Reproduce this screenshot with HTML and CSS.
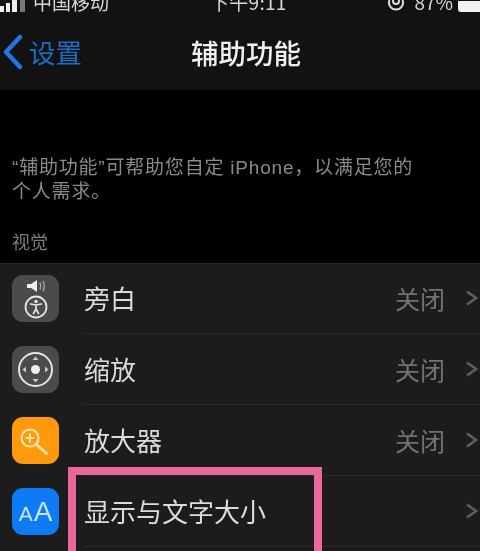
FILE: index.html
```html
<!DOCTYPE html>
<html lang="zh-CN">
<head>
<meta charset="utf-8">
<title>辅助功能</title>
<link rel="stylesheet" href="styles.css">
</head>
<body>
<div class="screen">
  <header class="top">
    <div class="status">
      <div class="status-left">
        <svg class="signal" viewBox="0 0 26 12"><rect x="0" y="6" width="4" height="6" fill="#eee"/><rect x="6" y="3" width="4" height="9" fill="#eee"/><rect x="12" y="0" width="5" height="12" fill="#eee"/><rect x="20" y="0" width="5" height="12" fill="#777"/></svg>
        <span class="status-text">中国移动</span>
      </div>
      <span class="status-text status-time">下午9:11</span>
      <div class="status-right">
        <svg class="lock" viewBox="0 0 18 12"><path d="M15.500 0a7 7 0 1 1-13 0" fill="none" stroke="#ddd" stroke-width="2"/><circle cx="9" cy="1" r="3" fill="none" stroke="#ddd" stroke-width="2"/></svg>
        <span class="status-text">87%</span>
        <span class="battery"></span>
      </div>
    </div>
    <nav class="nav">
      <div class="back">
        <svg class="back-arrow" viewBox="0 0 21 36"><path d="M18 3 4 18l14 15" fill="none" stroke="#1f78e0" stroke-width="4.500" stroke-linecap="round" stroke-linejoin="round"/></svg>
        <span class="back-label">设置</span>
      </div>
      <h1 class="title">辅助功能</h1>
    </nav>
  </header>

  <section class="intro">
    <p class="desc">“辅助功能”可帮助您自定 iPhone，以满足您的<br>个人需求。</p>
    <h2 class="group">视觉</h2>
  </section>

  <ul class="list">
    <li class="row">
      <span class="icon icon-gray">
        <svg viewBox="0 0 47 47"><path d="M15 9h4l6-4v12l-6-4h-4z" fill="#eee"/><path d="M28 7.500q1.500 3.500 0 7M31 6q2.500 5 0 10" fill="none" stroke="#aaa" stroke-width="1.300"/><circle cx="24" cy="32" r="10.500" fill="none" stroke="#e4e4e4" stroke-width="1.800"/><circle cx="24" cy="26.500" r="1.700" fill="#e4e4e4"/><path d="M18.500 29 24 30l5.500-1M24 30v4M24 34l-2.500 4.500M24 34l2.500 4.500" fill="none" stroke="#e4e4e4" stroke-width="1.700" stroke-linecap="round"/></svg>
      </span>
      <div class="row-body">
        <span class="label">旁白</span>
        <span class="value">关闭</span>
        <svg class="chev" viewBox="0 0 13 16"><path d="m2 1.500 9 6.500-9 6.500" fill="none" stroke="#5e5e60" stroke-width="2.600"/></svg>
      </div>
    </li>
    <li class="row">
      <span class="icon icon-gray">
        <svg viewBox="0 0 47 47"><circle cx="23.500" cy="23.500" r="16.500" fill="none" stroke="#e4e4e4" stroke-width="2"/><circle cx="23.500" cy="23.500" r="4.500" fill="#eee"/><path d="m23.500 10.500 3 3.500h-6zM23.500 36.500l3-3.500h-6zM10.500 23.500l3.500-3v6zM36.500 23.500l-3.500-3v6z" fill="#ccc"/></svg>
      </span>
      <div class="row-body">
        <span class="label">缩放</span>
        <span class="value">关闭</span>
        <svg class="chev" viewBox="0 0 13 16"><path d="m2 1.500 9 6.500-9 6.500" fill="none" stroke="#5e5e60" stroke-width="2.600"/></svg>
      </div>
    </li>
    <li class="row">
      <span class="icon icon-orange">
        <svg viewBox="0 0 47 47"><circle cx="18" cy="21" r="8.500" fill="none" stroke="#fde2b0" stroke-width="2.200"/><path d="M18 16.500v9M13.500 21h9" stroke="#fde2b0" stroke-width="2"/><path d="m24.500 27.500 10 9" stroke="#fde2b0" stroke-width="3" stroke-linecap="round"/></svg>
      </span>
      <div class="row-body">
        <span class="label">放大器</span>
        <span class="value">关闭</span>
        <svg class="chev" viewBox="0 0 13 16"><path d="m2 1.500 9 6.500-9 6.500" fill="none" stroke="#5e5e60" stroke-width="2.600"/></svg>
      </div>
    </li>
    <li class="row">
      <span class="icon icon-blue"><span class="aa-small">A</span><span class="aa-big">A</span></span>
      <div class="row-body">
        <span class="label">显示与文字大小</span>
        <svg class="chev" viewBox="0 0 13 16"><path d="m2 1.500 9 6.500-9 6.500" fill="none" stroke="#5e5e60" stroke-width="2.600"/></svg>
      </div>
    </li>
  </ul>

  <div class="highlight"></div>
</div>
</body>
</html>
```
FILE: styles.css
```css
* { box-sizing: border-box; }
html, body { margin: 0; padding: 0; background: #000; }
body { width: 480px; height: 551px; overflow: hidden; font-family: "Noto Sans CJK SC", "Liberation Sans", sans-serif; }
.screen { position: relative; width: 480px; height: 551px; overflow: hidden; display: flex; flex-direction: column; filter: blur(0.6px); }

.top { background: #121212; height: 90px; flex: none; }
.status { height: 12px; display: flex; align-items: flex-end; }
.status-left { display: flex; align-items: flex-end; width: 210px; flex: none; }
.status-right { display: flex; align-items: flex-end; margin-left: auto; }
.status-text { font-size: 19px; line-height: 20px; color: #d8d8d8; white-space: nowrap; }
.status-time { letter-spacing: 0.3px; }
.signal { width: 26px; height: 12px; margin-right: 7px; flex: none; }
.lock { width: 18px; height: 12px; margin-right: 9px; flex: none; }
.battery { width: 22px; height: 11px; margin-left: 5px; background: #f2f2f2; border-radius: 0 0 0 3px; flex: none; }

.nav { height: 78px; display: grid; grid-template-columns: 191px auto; align-items: center; padding-top: 2px; }
.back { display: flex; align-items: center; padding-left: 2px; gap: 6px; }
.back-arrow { width: 21px; height: 36px; flex: none; }
.back-label { font-size: 26.500px; line-height: 36px; color: #1c6cc8; }
.title { margin: 0; font-size: 27.500px; line-height: 36px; font-weight: 500; color: #f0f0f0; }

.intro { height: 173px; flex: none; background: #000; padding: 66px 0 0 12px; }
.desc { margin: 0; font-family: "Liberation Sans", "Noto Sans CJK SC", sans-serif; font-size: 19px; letter-spacing: 0.8px; line-height: 24px; color: #8a8a8a; white-space: nowrap; }
.group { margin: 25px 0 0; font-size: 18px; line-height: 24px; font-weight: 400; color: #7c7c7c; }

.list { flex: 1; margin: 0; padding: 0; list-style: none; background: #1c1c1d; box-shadow: inset 0 1px 0 #2c2c2c; }
.row { height: 71px; display: flex; align-items: center; padding-left: 12px; }
.icon { width: 47px; height: 47px; flex: none; border-radius: 11px; display: flex; align-items: baseline; justify-content: center; margin-right: 25px; }
.icon svg { width: 47px; height: 47px; display: block; }
.icon-gray { background: #4b4b4b; }
.icon-orange { background: #fe9a0b; }
.icon-blue { background: #0e7bf4; color: #c4e6ff; font-family: "Liberation Sans", sans-serif; line-height: 47px; }
.aa-small { font-size: 21px; }
.aa-big { font-size: 28px; margin-left: 1px; }
.row-body { flex: 1; height: 100%; display: flex; align-items: center; border-bottom: 1.500px solid #2b2b2d; padding-right: 2px; }
.label { flex: 1; font-size: 26px; line-height: 36px; color: #dcdcdc; }
.value { font-size: 25px; line-height: 36px; color: #737373; margin-right: 20px; }
.chev { width: 13px; height: 16px; flex: none; }

.highlight { position: absolute; left: 68px; top: 467px; width: 254px; height: 100px; border: 8px solid #e9689b; }
```
